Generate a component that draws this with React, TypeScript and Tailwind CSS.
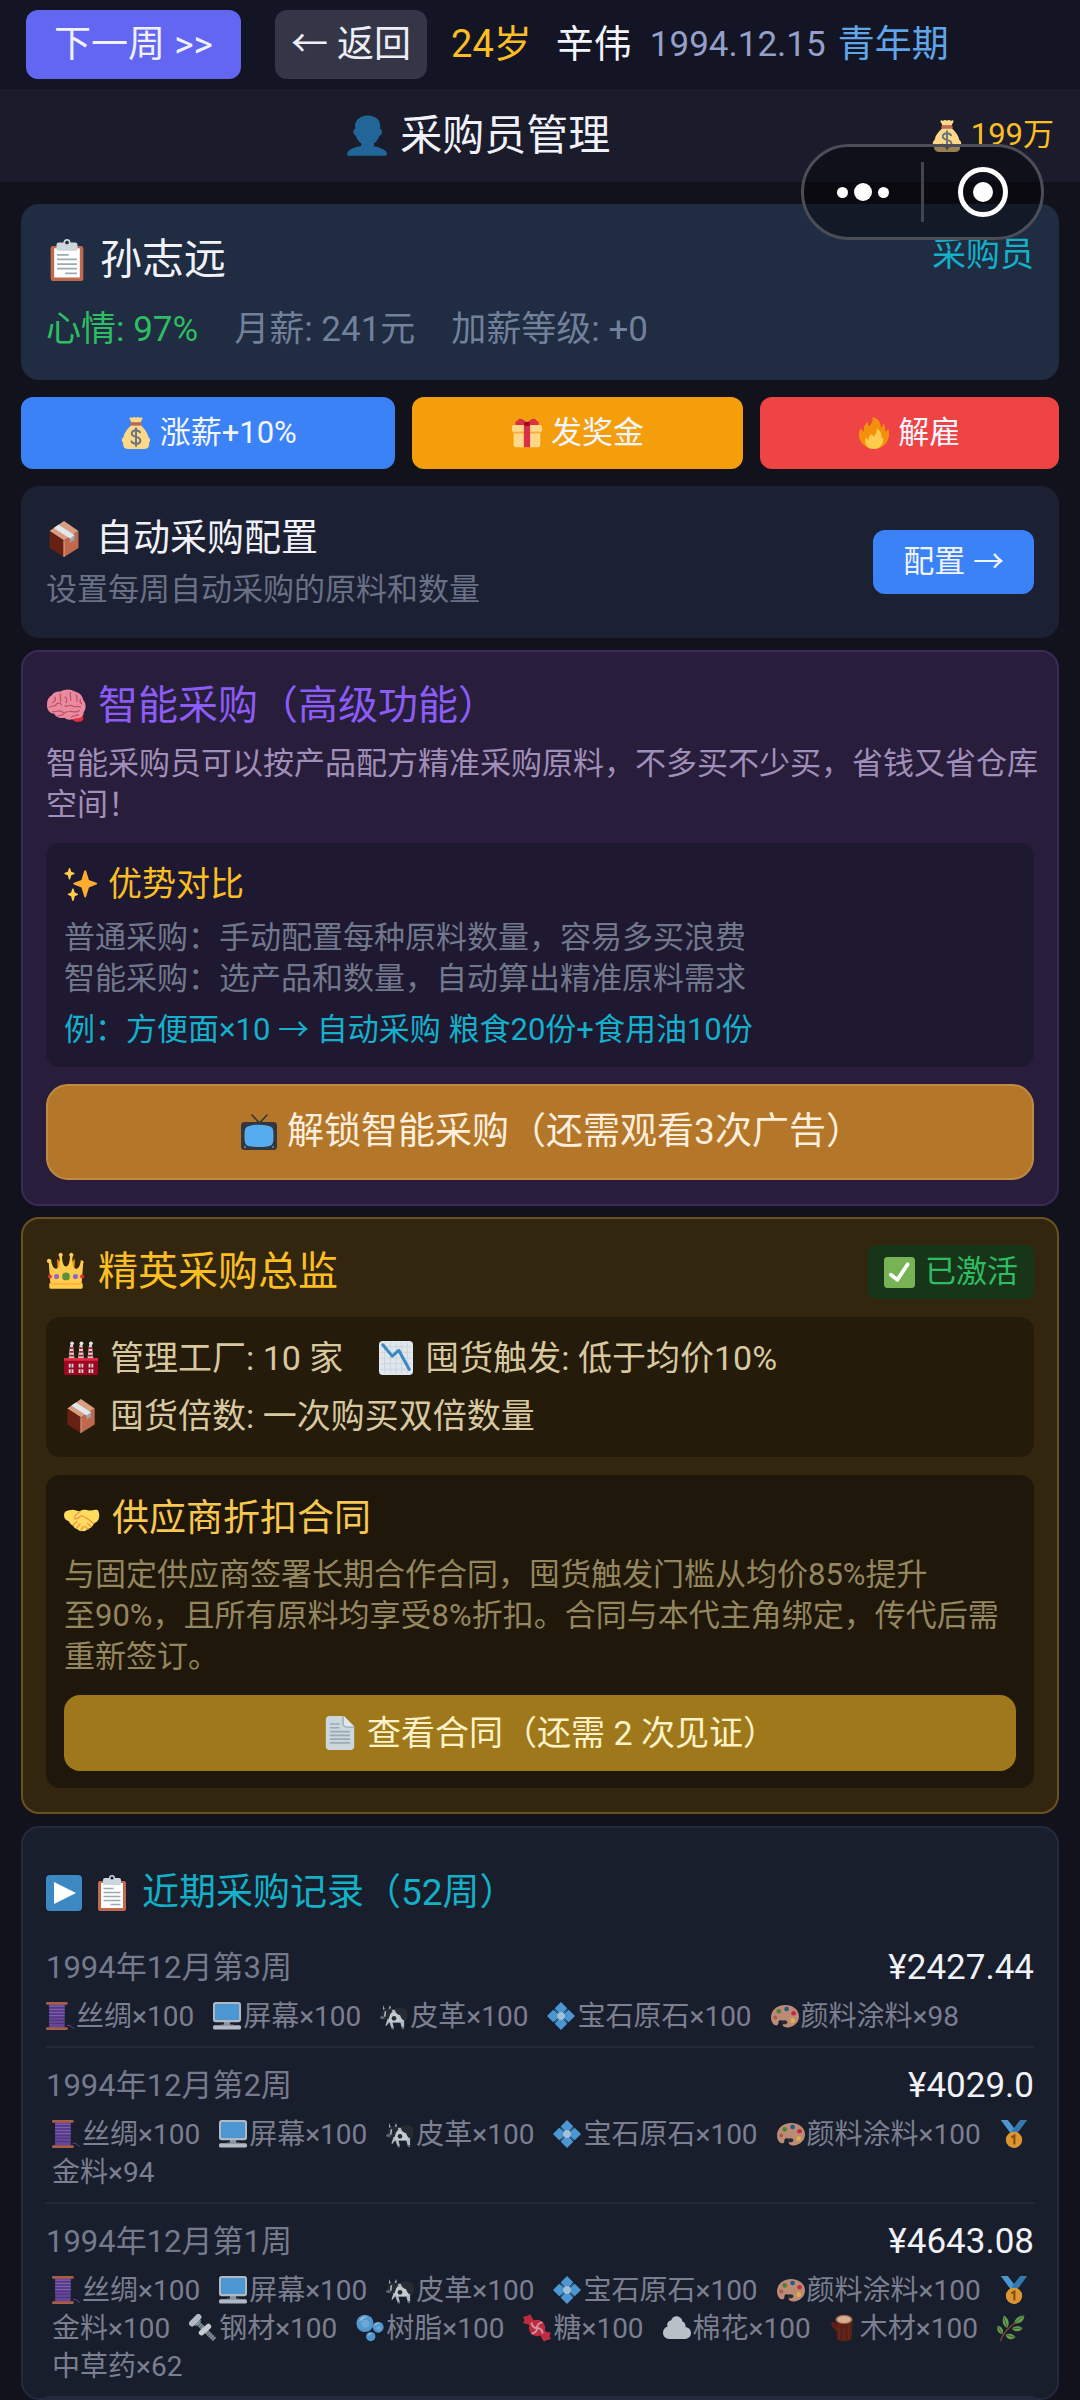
import type { ReactNode } from 'react';

// Colour pictograms, all drawn on a 36x36 grid
const art: Record<string, ReactNode> = {
  person: (
    <path
      fill="#226699"
      d="M24 26.799v-2.566c2-1.348 4.08-3.779 4.703-6.896.186.103.206.17.413.17.991 0 1.709-1.287 1.709-2.873 0-1.562-.823-2.827-1.794-2.865.187-.674.293-1.577.293-2.735C29.324 5.168 26 .527 18.541.527c-6.629 0-10.777 4.641-10.777 8.507 0 1.123.069 2.043.188 2.755-.911.137-1.629 1.352-1.629 2.845 0 1.587.804 2.873 1.796 2.873.206 0 .025-.067.209-.17C8.952 20.453 11 22.885 13 24.232v2.414c-5 .645-12 3.437-12 6.23v1.061C1 35 2.076 35 3.137 35h29.725C33.924 35 35 35 35 33.938v-1.061c0-2.615-6-5.225-11-6.078z"
    />
  ),
  clipboard: (
    <>
      <rect x="4" y="6" width="28" height="30" rx="2" fill="#C1694F" />
      <path fill="#fff" d="M7 8h22v25H7z" />
      <path
        fill="#CCD6DD"
        d="M25 3h-4a3 3 0 1 0-6 0h-4a2 2 0 0 0-2 2v4a1 1 0 0 0 1 1h16a1 1 0 0 0 1-1V5a2 2 0 0 0-2-2zm-7 1.6a1.6 1.6 0 1 1 0-3.2 1.6 1.6 0 0 1 0 3.2z"
      />
      <path stroke="#99AAB5" strokeWidth="1.5" d="M9.500 13.500h10M9.500 17.500h17M9.500 21.500h17M9.500 25.500h17M16.500 29.500h10" />
    </>
  ),
  bag: (
    <>
      <path
        fill="#FDD888"
        d="M31.900 22.400c-.8-5-4.500-9.300-8.300-13.200H12.500C8.500 13.300 4.700 17.500 4 22.500c-.5.700-2 1.500-2 3.300 0 1.400.7 2.500 1.700 3.100-.2.800-.2 1.300-.2 1.900 0 3 2 5.200 6 5.200h17.300c4 0 6-2.200 6-5.200 0-.6 0-1.200-.3-1.800.9-.6 1.500-1.700 1.500-3 0-1.700-1.200-2.800-2.100-3.600zM13 6.500h10l2.500-5.200C25 0 23.500 0 22.600 1 21.500-.2 19.200-.2 18 .9c-1.200-1.100-3.400-1.100-4.500.1-1-.9-2.600-.9-3 .3z"
      />
      <rect x="11.500" y="6" width="13" height="3.600" rx="1.800" fill="#BF6952" />
      <path
        fill="none"
        stroke="#67757F"
        strokeWidth="2.200"
        strokeLinecap="round"
        d="M22.500 17.200c-.8-1.600-2.600-2.300-4.600-2.300-2.600 0-4.700 1.300-4.700 3.700 0 5 9.700 2.600 9.700 7.700 0 2.500-2.300 3.900-4.900 3.900-2.300 0-4.300-.9-5.100-2.700M18 12.500v20"
      />
    </>
  ),
  gift: (
    <>
      <path fill="#FDD888" d="M33 31a3 3 0 0 1-3 3H6a3 3 0 0 1-3-3V15h30z" />
      <rect x="1" y="9" width="34" height="8" rx="3" fill="#FDD888" />
      <path fill="#FCAB40" d="M3 16.500h30v2H3z" />
      <path fill="#DA2F47" d="M14.500 9h7v25h-7z" />
      <path
        fill="#DA2F47"
        d="M18 8.500C17 5 13 1.500 9.500 2 8 2.200 8.300 4 6.500 4.500 5 5 4.500 6 5 9h13zM18 8.500C19 5 23 1.500 26.500 2c1.500.2 1.200 2 3 2.500C31 5 31.500 6 31 9H18z"
      />
      <path fill="#A0041E" d="M15 5.500h6V10h-6z" />
    </>
  ),
  fire: (
    <>
      <path
        fill="#F4900C"
        d="M35 19c0-2.100-.4-4-1-5.900-1 1.400-2.300 2.600-4 2.900 1-3 .7-6.500-2-9 .2 2.600-.6 4.200-2.300 5C26 6.500 23 1.500 16 0c1.500 4-.4 7-3.500 10.500C10.800 8.800 10.900 6.600 11.500 5 7 7.800 6 12.500 6.700 16.500 4.600 16 3.700 14.200 3.400 12.500 1.800 14.700 1 16.800 1 19.500 1 28.500 8.600 36 18 36s17-7.600 17-17z"
      />
      <path
        fill="#FFCC4D"
        d="M28.400 23.700c-.9.200-1.600 0-2-.7.600-4.600-1.700-8.300-5.400-10 .8 4-1.500 6-2.500 9-.8-1-2.600-1.200-3.500-3-2.600 1.500-3.200 4.600-2.500 6.500-2-.2-3-1.400-3.500-3C6.400 31 10.500 36 18 36c6 0 10.900-4.500 10.400-12.300z"
      />
    </>
  ),
  box: (
    <>
      <path fill="#D99E82" d="M18 0l14.500 10L18 19.500 3.500 10z" />
      <path fill="#662113" d="M3.500 10L18 19.500V36L3.500 27z" />
      <path fill="#C1694F" d="M32.500 10L18 19.500V36l14.500-9z" />
      <path fill="#D99E82" d="M17.400 19.500h1.200V36h-1.200z" />
      <path fill="#99AAB5" d="M24 16.500l4.500-3v6l-2.300.2L24 22z" />
      <path fill="#E1E8ED" d="M7.800 7l4.700-3.200L28.500 14 24 17.400z" />
    </>
  ),
  brain: (
    <>
      <path fill="#DD2E44" d="M22 27c2 5 5 6 9 5 3-.8 3-3 2-5z" />
      <path
        fill="#EA8A9E"
        d="M13 5C17 2.500 22 2.500 26 5c4 1 7 4 7.500 7.500C36 15 36.500 20 34 23.500c0 4.500-4 6-8 5.500-3 2-7.500 1.500-9.500-.5-4 1-8-.5-9-3.500C3 24.500.5 21 1 17c-.5-4 1.500-7 4-8.500C6.500 6 10 4.500 13 5z"
      />
      <path
        fill="none"
        stroke="#BE5068"
        strokeWidth="1.100"
        strokeLinecap="round"
        d="M8 10c1 2 0 4-2 5M13 7c-1 3 1 4 0 7M17 10c2 0 2 3 1 5M22 6c-1 3 1 4 0 7M27 8c2 2 0 4 1 6M31 12c-1 2 0 3 1 4M3 19c3-2 5 0 6-2s4-2 5 0M17 18c3 1 4-2 7 0s4-1 7 1M6 23c3 1 5-2 8 0s3 1 5 0M21 23c3-1 5 2 9-1M11 27c2-1 4 0 5-2M23 28c2-2 4-1 6-2"
      />
    </>
  ),
  sparkles: (
    <>
      <path fill="#FFAC33" d="M34.300 16.700l-7.900-3-3-9.700a1 1 0 0 0-1.900 0l-3 9.700-7.900 3a1 1 0 0 0 0 1.900l7.900 3 3 9.900a1 1 0 0 0 1.900 0l3-9.900 7.900-3a1 1 0 0 0 0-1.900z" />
      <path fill="#FFCC4D" d="M14.400 28.200l-3-1.100-1.200-3.800c-.3-.7-1.200-.7-1.500 0l-1.200 3.800-3 1.100a.8.800 0 0 0 0 1.500l3 1.200 1.200 4.500c.3.700 1.200.7 1.500 0l1.200-4.500 3-1.200a.8.800 0 0 0 0-1.500zM10.600 6.100L7.700 5 6.600 1.600c-.3-.8-1.300-.8-1.500 0L4 5 1 6.100a.8.800 0 0 0 0 1.500l3 1.100 1.100 4c.2.800 1.200.8 1.500 0l1.100-4 2.900-1.100a.8.800 0 0 0 0-1.500z" />
    </>
  ),
  tv: (
    <>
      <path stroke="#31373D" strokeWidth="1.600" strokeLinecap="round" d="M11 1l7.500 8L26 1" />
      <rect y="8" width="36" height="28" rx="3.500" fill="#31373D" />
      <path fill="#55ACEE" d="M10 11.500c5-1 11-1 16 0 4 .7 6 2 6.200 5 .4 4 .4 8 0 11-.4 3-2.200 4.500-6.200 5-5 .7-11 .7-16 0-4-.5-5.800-2-6.200-5-.4-3-.4-7 0-11 .2-3 2.200-4.300 6.200-5z" />
      <circle cx="4" cy="33" r="1.200" fill="#66757F" />
      <circle cx="32" cy="33" r="1.200" fill="#66757F" />
    </>
  ),
  crown: (
    <>
      <path fill="#F4900C" d="M14.200 10.600c.5.700.8 1.600.8 2.500 0 2.700-2.500 4.400-4.500 5.400L10 6zm7.600 0c-.5.700-.8 1.600-.8 2.500 0 2.700 2.500 4.400 4.500 5.400L26 6z" />
      <path
        fill="#FFCC4D"
        d="M34 9.500a2 2 0 0 0-2.700-1.900c-.5 5-2.300 7.500-4.300 7.500-2.500 0-3-3-3.300-8.500L24 4a1.800 1.800 0 1 0-2.400 0c-.2 5-1.200 9-3.600 9s-3.400-4-3.600-9A1.800 1.800 0 1 0 12 4l.3 2.600C12 12 11.500 15 9 15c-2 0-3.800-2.500-4.300-7.500A2 2 0 1 0 2.500 10L4 29h28l1.500-19z"
      />
      <rect x="3" y="28" width="30" height="5" rx="1" fill="#FFCC4D" />
      <path fill="#FFAC33" d="M4 28h28v1.300H4z" />
      <circle cx="18" cy="22" r="3.500" fill="#5C913B" />
      <circle cx="9.500" cy="22" r="2.300" fill="#9266CC" />
      <circle cx="26.500" cy="22" r="2.300" fill="#9266CC" />
      <circle cx="3.500" cy="22" r="1.800" fill="#DD2E44" />
      <circle cx="32.500" cy="22" r="1.800" fill="#DD2E44" />
    </>
  ),
  check: (
    <>
      <rect width="36" height="36" rx="4" fill="#77B255" />
      <path fill="none" stroke="#fff" strokeWidth="4.400" strokeLinecap="round" strokeLinejoin="round" d="M8 20.500l7.500 6L27.500 8.500" />
    </>
  ),
  factory: (
    <>
      <path fill="#CCD6DD" d="M5 18L6.500 4h3L11 18zM15 18l1.500-14h3L21 18zM25 18l1.500-14h3L31 18z" />
      <path stroke="#BE1931" strokeWidth="1.800" d="M5.500 15.500h5M6 11.500h4M6.300 7.500h3.500M15.500 15.500h5M16 11.500h4M16.300 7.500h3.500M25.500 15.500h5M26 11.500h4M26.300 7.500h3.500" />
      <circle cx="8.500" cy="2.500" r="2" fill="#E1E8ED" />
      <circle cx="18.500" cy="2.500" r="2" fill="#E1E8ED" />
      <circle cx="28.500" cy="2.500" r="2" fill="#E1E8ED" />
      <rect y="18" width="36" height="18" rx="1.500" fill="#A0041E" />
      <path fill="#DD2E44" d="M0 18h36v3H0z" />
      <path fill="#CCD6DD" d="M5 24h5v4H5zM15.500 24h5v4h-5zM26 24h5v4h-5zM5 30h5v4H5zM15.500 30h5v4h-5zM26 30h5v4h-5z" />
      <path stroke="#A0041E" d="M7.500 24v10M18 24v10M28.500 24v10" />
    </>
  ),
  chart: (
    <>
      <rect width="36" height="36" rx="4" fill="#E1E8ED" />
      <path stroke="#CCD6DD" strokeWidth="1.200" d="M6 2v32M12 2v32M18 2v32M24 2v32M30 2v32M2 6h32M2 12h32M2 18h32M2 24h32M2 30h32" />
      <path fill="none" stroke="#3B88C3" strokeWidth="3.200" strokeLinecap="round" strokeLinejoin="round" d="M4 4l10 12 7-6 11 20" />
    </>
  ),
  handshake: (
    <>
      <path
        fill="#FFDC5D"
        d="M1.500 10.500C4 9.500 8 8.500 10 9c3 .5 4 1.500 6 1 2.500-1.500 6-1.500 9-.5 3 0 6-1.500 8.500-.5 1.500 1 2.500 6 1 9.500-.8 2-3 3-4.500 4-1 2.500-3.500 5-6 5.500-1.500 1.500-3.500 2.500-5.500 2-2 .5-4-.5-5.500-2-2-.5-3.500-2-4-3.500-2.500-1-3-2.500-4.500-4.500-2-.5-3.500-2-4-3-.8-2-.5-5.500 1-6.500z"
      />
      <path
        fill="none"
        stroke="#EF9645"
        strokeWidth="1.300"
        strokeLinecap="round"
        d="M16 10.500c-3 2-6 5-5.500 7 3 1.500 5.500-2 7-3 4 2 9 5 12 8M9 24l4-3.500M12.500 27l3.500-4M17 29l2.500-3.500M21 25.500l3 2.500M23.500 22.500l3.500 3"
      />
    </>
  ),
  page: (
    <>
      <path fill="#CCD6DD" d="M3 4a4 4 0 0 1 4-4h15l11 11v21a4 4 0 0 1-4 4H7a4 4 0 0 1-4-4z" />
      <path fill="#99AAB5" d="M20.500 0h1.500l11 11v1.500h-8a4.500 4.500 0 0 1-4.500-4.500z" />
      <path fill="#E1E8ED" d="M22 0l11 11h-8a3 3 0 0 1-3-3z" />
      <path stroke="#99AAB5" strokeWidth="1.700" strokeLinecap="round" d="M8 8.500h9M8 12.500h9M8 16.500h20M8 20.500h20M8 24.500h20M8 28.500h20" />
    </>
  ),
  play: (
    <>
      <rect width="36" height="36" rx="4" fill="#3B88C3" />
      <path fill="#fff" d="M8 7l22 11L8 29z" />
    </>
  ),
  spool: (
    <>
      <path fill="none" stroke="#744EAA" strokeWidth="1.200" d="M27 30c4-1 6 3 9 4" />
      <path fill="#744EAA" d="M4 3h20v30H4z" />
      <path stroke="#553986" strokeWidth="1.300" d="M4 7.500h20M4 11.500h20M4 15.500h20M4 19.500h20M4 23.500h20M4 27.500h20" />
      <path stroke="#9266CC" strokeWidth="1.300" d="M4 5.500h20M4 9.500h20M4 13.500h20M4 17.500h20" />
      <rect x="0" y="0" width="28" height="3.600" rx="1.500" fill="#C1694F" />
      <rect x="0" y="32.400" width="28" height="3.600" rx="1.500" fill="#C1694F" />
    </>
  ),
  screen: (
    <>
      <path fill="#99AAB5" d="M14 25h8v6h-8z" />
      <rect width="36" height="26" rx="3.500" fill="#CCD6DD" />
      <rect x="2.500" y="2.500" width="31" height="20.500" rx="1.500" fill="#55ACEE" />
      <rect y="30" width="36" height="5.500" rx="2" fill="#CCD6DD" />
      <path fill="#99AAB5" d="M10 29h16v1.500H10z" />
    </>
  ),
  cow: (
    <>
      <path fill="#CCD6DD" d="M10 10h22c2 2 3 5 2 9l-3 5v9h-3l-2-7H16l2 8h-3l-3-8-4 5-1-1 2-6z" />
      <path fill="#E1E8ED" d="M9 14c4-1 11 0 17 2l3 9c-5 2-12 2-17 0z" />
      <path fill="#292F33" d="M19 8c5-2 12-2 15 2 2 4 2 9 0 14-5 0-7-3-8-7-4-1-7-4-7-9z" />
      <circle cx="18" cy="21" r="3" fill="#292F33" />
      <path fill="#292F33" d="M3 12L5 8l4 1 5-1 2 4-3 4-2 6-6 1-4-2z" />
      <path fill="#CCD6DD" d="M4 4l2 5-2 1zM13 4l1 4-3 1zM6 12l2 0-1 7-2 0z" />
      <ellipse cx="3" cy="20" rx="3" ry="2" fill="#66757F" />
      <path fill="#66757F" d="M15 33h3v2.500h-3zM28 32h3v3h-3z" />
    </>
  ),
  gem: (
    <>
      <path fill="#55ACEE" d="M18 0l8 8-3 4-5 4-5-4-3-4zM8 10l4.500 3.500L16 18l-3.500 4.500L8 26l-8-8zM28 10l8 8-8 8-4.500-3.500L20 18l3.500-4.500zM18 20l5 4 3 4-8 8-8-8 3-4z" />
      <path stroke="#2B6CA3" strokeWidth="1.500" d="M9.500 9.500l17 17M26.500 9.500l-17 17" />
      <circle cx="18" cy="18" r="5" fill="#BBDDF5" />
    </>
  ),
  palette: (
    <>
      <path
        fill="#D99E82"
        d="M18 4C8 4 0 11 0 19.500 0 25 3 30 7 30c3.500 0 2-3.500 3-5.500 1-1.500 4-1.500 5 .5s-1 4 .5 6c2 2 6 2 9.500 1 6.500-2 11-7 11-13.500C36 10 28 4 18 4z"
      />
      <ellipse cx="17" cy="26" rx="4" ry="2.600" fill="#292F33" />
      <circle cx="10" cy="12" r="3" fill="#5C913B" />
      <circle cx="20" cy="9" r="3" fill="#226699" />
      <circle cx="29" cy="14.500" r="3" fill="#DD2E44" />
      <circle cx="28" cy="24" r="3" fill="#FFCC4D" />
      <circle cx="5.500" cy="20" r="2.500" fill="#C1694F" />
    </>
  ),
  medal: (
    <>
      <path fill="#55ACEE" d="M1 0h9l11 14-6 5z" />
      <path fill="#3B88C3" d="M35 0h-9L15 14l6 5z" />
      <circle cx="18" cy="25.500" r="10.500" fill="#FFAC33" />
      <path fill="none" stroke="#9E5200" strokeWidth="2.600" d="M14.500 22.500l4-2.500v11.500" />
    </>
  ),
  bolt: (
    <>
      <path stroke="#66757F" strokeWidth="6" d="M10 10l23 23" />
      <path stroke="#99AAB5" strokeWidth="6" strokeDasharray="1.500 1.500" d="M10 10l23 23" />
      <path stroke="#CCD6DD" strokeWidth="8" strokeLinecap="round" d="M4 12l8-8" />
      <path stroke="#E1E8ED" strokeWidth="7" strokeLinecap="round" d="M16 24l9-8" />
      <path stroke="#99AAB5" strokeWidth="2" d="M8 15l7-7" />
    </>
  ),
  bubbles: (
    <>
      <circle cx="11.500" cy="12" r="11" fill="#5DADEC" />
      <circle cx="28.500" cy="17" r="7" fill="#5DADEC" />
      <circle cx="19" cy="29" r="6" fill="#5DADEC" />
      <path fill="#BDDDF4" d="M4 10c1-5 6-8 11-6-4 0-6 3-11 6zM23 16c1-4 5-5 7-4-2 1-4 2-7 4zM15 28c1-3 3-4 5-3-1 1-3 2-5 3z" />
      <circle cx="12" cy="12.500" r="5" fill="#8CCAF7" opacity=".7" />
      <circle cx="29" cy="18" r="3" fill="#8CCAF7" opacity=".7" />
    </>
  ),
  candy: (
    <>
      <path fill="#DD2E44" d="M0 4l7-2 2-2 3 5 3 6-6 4-4-2-5-1 2-4zM36 32l-7 2-2 2-3-5-3-6 6-4 4 2 5 1-2 4z" />
      <circle cx="18" cy="18" r="10.500" fill="#DD2E44" />
      <path fill="none" stroke="#F4ABBA" strokeWidth="2.600" d="M18 18c0-4 3-7 7-7M18 18c4 0 7 3 7 7M18 18c0 4-3 7-7 7M18 18c-4 0-7-3-7-7" />
    </>
  ),
  cloud: (
    <path
      fill="#D5DEE4"
      d="M29 17c0-.3.100-.6.100-1A7 7 0 0 0 25 9.500C24.500 6 21 3 17.500 3a7.500 7.500 0 0 0-7 5A5.500 5.500 0 0 0 6 16C2.500 17 0 20 0 24c0 5 4 8 8 8h21c4 0 7-3.500 7-7.500S33 17 29 17z"
    />
  ),
  log: (
    <>
      <path fill="#662113" d="M7 8h22l-1 24c-3 4-16 4-19 0zM1 11l4-1 5 7v6L3 17z" />
      <path stroke="#792B1A" strokeWidth="1.600" d="M12 14v18M24 14v18M18 20v14" />
      <ellipse cx="18" cy="7" rx="11" ry="6" fill="#C1694F" />
      <ellipse cx="18" cy="7" rx="9" ry="4.500" fill="#F1C9A5" />
    </>
  ),
  herb: (
    <>
      <path fill="none" stroke="#8A4B38" strokeWidth="1.800" d="M4 35C8 24 18 14 30 7" />
      <path
        fill="#77B255"
        d="M22 12c1-6 6-10 13-10 0 7-5 11-13 10zM13 18C7 15 6 8 9 2c6 4 8 10 4 16zM7 26C1 25-1 20 1 15c6 1 8 6 6 11zM19 19c4-4 10-4 14-1-3 5-9 6-14 1zM11 27c4-3 10-2 13 3-5 4-11 3-13-3z"
      />
      <path stroke="#3E721D" strokeWidth="1.200" d="M22 12L35 2M13 18L9 4M7 26L1 16M20 19l12-1M12 27l11 3" />
    </>
  ),
};

function Emoji({ name, className }: { name: string; className: string }) {
  return (
    <svg viewBox="0 0 36 36" fill="none" aria-hidden="true" className={`shrink-0 ${className}`}>
      {art[name]}
    </svg>
  );
}

const goods = {
  silk: { icon: 'spool', label: '丝绸' },
  screen: { icon: 'screen', label: '屏幕' },
  leather: { icon: 'cow', label: '皮革' },
  gem: { icon: 'gem', label: '宝石原石' },
  paint: { icon: 'palette', label: '颜料涂料' },
  gold: { icon: 'medal', label: '金料' },
  steel: { icon: 'bolt', label: '钢材' },
  resin: { icon: 'bubbles', label: '树脂' },
  sugar: { icon: 'candy', label: '糖' },
  cotton: { icon: 'cloud', label: '棉花' },
  wood: { icon: 'log', label: '木材' },
  herb: { icon: 'herb', label: '中草药' },
};

type Line = [keyof typeof goods, number];

const records: { date: string; total: string; lines: Line[] }[] = [
  {
    date: '1994年12月第3周',
    total: '¥2427.44',
    lines: [['silk', 100], ['screen', 100], ['leather', 100], ['gem', 100], ['paint', 98]],
  },
  {
    date: '1994年12月第2周',
    total: '¥4029.0',
    lines: [['silk', 100], ['screen', 100], ['leather', 100], ['gem', 100], ['paint', 100], ['gold', 94]],
  },
  {
    date: '1994年12月第1周',
    total: '¥4643.08',
    lines: [
      ['silk', 100], ['screen', 100], ['leather', 100], ['gem', 100], ['paint', 100], ['gold', 100],
      ['steel', 100], ['resin', 100], ['sugar', 100], ['cotton', 100], ['wood', 100], ['herb', 62],
    ],
  },
];

const actions = [
  { icon: 'bag', label: '涨薪+10%', color: 'bg-[#3b82f6]' },
  { icon: 'gift', label: '发奖金', color: 'bg-[#f59e0b]' },
  { icon: 'fire', label: '解雇', color: 'bg-[#ef4444]' },
];

function TopBar() {
  return (
    <nav className="flex items-center whitespace-nowrap bg-[#131524] px-[26px] py-[10px] text-[37px] leading-[69px]">
      <button type="button" className="rounded-xl bg-[#6366f1] px-7 text-[#f0f0ff]">
        下一周 &gt;&gt;
      </button>
      <button type="button" className="ml-[34px] rounded-xl bg-[#343648] px-4 text-[#eeeef6]">
        ← 返回
      </button>
      <span className="ml-6 text-[38px] text-[#fbbf24]">24岁</span>
      <span className="ml-6 text-[38px] text-[#f4f4fb]">辛伟</span>
      <span className="ml-[18px] text-[35px] text-[#94a0c8]">1994.12.15</span>
      <span className="ml-3 text-[#60a5e8]">青年期</span>
    </nav>
  );
}

function Capsule() {
  return (
    <div className="absolute right-9 top-36 flex h-24 w-[243px] items-center rounded-full border-3 border-[#4b4d57] bg-black/40">
      <button type="button" aria-label="更多" className="flex flex-1 items-center justify-center gap-[6px]">
        <span className="size-[11px] rounded-full bg-white" />
        <span className="size-[18px] rounded-full bg-white" />
        <span className="size-[11px] rounded-full bg-white" />
      </button>
      <span className="h-[60px] w-[3px] bg-[#43454e]" />
      <button type="button" aria-label="关闭" className="flex flex-1 items-center justify-center">
        <span className="flex size-[50px] items-center justify-center rounded-full border-5 border-white">
          <span className="size-5 rounded-full bg-white" />
        </span>
      </button>
    </div>
  );
}

function SmartCard() {
  return (
    <section className="mt-3 rounded-[18px] border-2 border-[#3b2a5a] bg-[#281d3b] px-[23px] pb-6 pt-7">
      <h2 className="flex items-center gap-3 text-[40px] leading-[52px] text-[#8b5cf6]">
        <Emoji name="brain" className="size-10" />
        智能采购（高级功能）
      </h2>
      <p className="-mr-2 mt-[11px] text-[31px] leading-[41px] text-[#a08fb8]">
        智能采购员可以按产品配方精准采购原料，不多买不少买，省钱又省仓库空间！
      </p>
      <div className="mt-[18px] rounded-[14px] bg-[#1e1930] px-[18px] pb-[17px] pt-[18px] text-[31px] leading-[41px]">
        <h3 className="flex items-center gap-[10px] text-[34px] leading-[46px] text-[#fbbf24]">
          <Emoji name="sparkles" className="size-[34px]" />
          优势对比
        </h3>
        <p className="mt-[10px] text-[#72788c]">普通采购：手动配置每种原料数量，容易多买浪费</p>
        <p className="text-[#72788c]">智能采购：选产品和数量，自动算出精准原料需求</p>
        <p className="mt-[10px] text-[#14b0cc]">例：方便面×10 → 自动采购 粮食20份+食用油10份</p>
      </div>
      <button
        type="button"
        className="mt-[17px] flex w-full items-center justify-center gap-[10px] rounded-[22px] border-2 border-[#c08a42] bg-[#b47628] py-5 pl-6 text-[37px] leading-[52px] text-[#fdeedd]"
      >
        <Emoji name="tv" className="size-9" />
        解锁智能采购（还需观看3次广告）
      </button>
    </section>
  );
}

function EliteCard() {
  return (
    <section className="mt-[11px] rounded-[18px] border-2 border-[#6b5022] bg-[#33260e] px-[23px] pb-6 pt-[26px]">
      <div className="flex items-center justify-between">
        <h2 className="flex items-center gap-3 text-[40px] leading-[54px] text-[#fbbf24]">
          <Emoji name="crown" className="size-10" />
          精英采购总监
        </h2>
        <span className="flex items-center gap-[10px] rounded-lg bg-[#173619] px-4 text-[31px] leading-[54px] text-[#2fbd62]">
          <Emoji name="check" className="size-[31px]" />
          已激活
        </span>
      </div>
      <div className="mt-[18px] flex flex-wrap gap-x-9 rounded-[14px] bg-[#241b0a] px-[18px] py-3 text-[34px] leading-[58px] text-[#d8c8a0]">
        <span className="flex items-center gap-3">
          <Emoji name="factory" className="size-[34px]" />
          管理工厂: 10 家
        </span>
        <span className="flex items-center gap-3">
          <Emoji name="chart" className="size-[34px]" />
          囤货触发: 低于均价10%
        </span>
        <span className="flex items-center gap-3">
          <Emoji name="box" className="size-[34px]" />
          囤货倍数: 一次购买双倍数量
        </span>
      </div>
      <div className="mt-[18px] rounded-[14px] bg-[#1f180a] px-[18px] pb-[17px] pt-[19px]">
        <h3 className="flex items-center gap-3 text-[37px] leading-[50px] text-[#f8c850]">
          <Emoji name="handshake" className="size-9" />
          供应商折扣合同
        </h3>
        <p className="mt-[10px] text-[31px] leading-[41px] text-[#94865f]">
          与固定供应商签署长期合作合同，囤货触发门槛从均价85%提升
          <br />
          至90%，且所有原料均享受8%折扣。合同与本代主角绑定，传代后需重新签订。
        </p>
        <button
          type="button"
          className="mt-[18px] flex w-full items-center justify-center gap-[10px] rounded-2xl bg-[#a0781c] pl-5 text-[34px] leading-[76px] text-[#fdf3c8]"
        >
          <Emoji name="page" className="size-[34px]" />
          查看合同（还需 2 次见证）
        </button>
      </div>
    </section>
  );
}

function RecordsCard() {
  return (
    <section className="mt-3 rounded-[18px] border-2 border-[#222a3e] bg-[#191e2c] px-[23px] pt-10">
      <h2 className="flex items-center gap-3 text-[37px] leading-[50px] text-[#14b0c8]">
        <Emoji name="play" className="size-9" />
        <Emoji name="clipboard" className="size-9" />
        近期采购记录（52周）
      </h2>
      <ul className="mt-3">
        {records.map((record) => (
          <li key={record.date} className="border-b-2 border-[#242938] pb-[10px] pt-[14px]">
            <div className="flex items-center justify-between leading-[48px]">
              <span className="text-[31px] text-[#757a8c]">{record.date}</span>
              <span className="text-[35px] text-[#f1f1f8]">{record.total}</span>
            </div>
            <p className={`mt-[6px] text-[28px] leading-[38px] text-[#7b7f90] ${record.lines.length > 5 ? 'pl-[6px]' : ''}`}>
              {record.lines.map(([good, count]) => (
                <span key={good}>
                  <Emoji name={goods[good].icon} className="mr-[2px] inline-block size-7 align-[-4px] opacity-85" />
                  <span className="mr-3 whitespace-nowrap">
                    {goods[good].label}×{count}
                  </span>{' '}
                </span>
              ))}
            </p>
          </li>
        ))}
      </ul>
    </section>
  );
}

export default function App() {
  return (
    <div className="relative h-screen overflow-hidden bg-[#11121b] font-[Roboto,'Noto_Sans_CJK_SC',sans-serif]">
      <TopBar />
      <header className="flex items-center justify-between bg-[#1a1c2c] px-[26px]">
        <span />
        <h1 className="flex items-center gap-3 text-[42px] leading-[93px] text-[#f1f1f8]">
          <Emoji name="person" className="size-[42px]" />
          采购员管理
        </h1>
        <span className="flex items-center gap-2 text-[31px] text-[#fbbf24]">
          <Emoji name="bag" className="size-8" />
          199万
        </span>
      </header>
      <Capsule />

      <main className="px-[21px] pt-[22px]">
        <section className="rounded-[18px] bg-[#1f2c42] px-[25px] pb-[25px] pt-[26px]">
          <div className="flex items-start justify-between">
            <h2 className="flex items-center gap-3 text-[42px] leading-[60px] text-[#f1f1f8]">
              <Emoji name="clipboard" className="size-[42px]" />
              孙志远
            </h2>
            <span className="text-[34px] leading-[48px] text-[#14b0c8]">采购员</span>
          </div>
          <div className="mt-[15px] flex gap-9 text-[35px] leading-[50px] text-[#72809a]">
            <span className="text-[#2fbd62]">心情: 97%</span>
            <span>月薪: 241元</span>
            <span>加薪等级: +0</span>
          </div>
        </section>

        <div className="mt-[17px] flex gap-[17px]">
          {actions.map((action) => (
            <button
              key={action.label}
              type="button"
              className={`flex flex-auto items-center justify-center gap-2 rounded-xl text-[31px] leading-[72px] text-[#f4f6ff] ${action.color}`}
            >
              <Emoji name={action.icon} className="size-8" />
              {action.label}
            </button>
          ))}
        </div>

        <section className="mt-[17px] flex items-center justify-between rounded-[18px] bg-[#1c2033] px-[25px] py-[25px]">
          <div>
            <h2 className="flex items-center gap-[14px] text-[37px] leading-[56px] text-[#f1f1f8]">
              <Emoji name="box" className="size-9" />
              自动采购配置
            </h2>
            <p className="text-[31px] leading-[46px] text-[#697186]">设置每周自动采购的原料和数量</p>
          </div>
          <button type="button" className="rounded-xl bg-[#3b82f6] px-[30px] text-[31px] leading-[64px] text-[#f0f4ff]">
            配置 →
          </button>
        </section>

        <SmartCard />
        <EliteCard />
        <RecordsCard />
      </main>
    </div>
  );
}
